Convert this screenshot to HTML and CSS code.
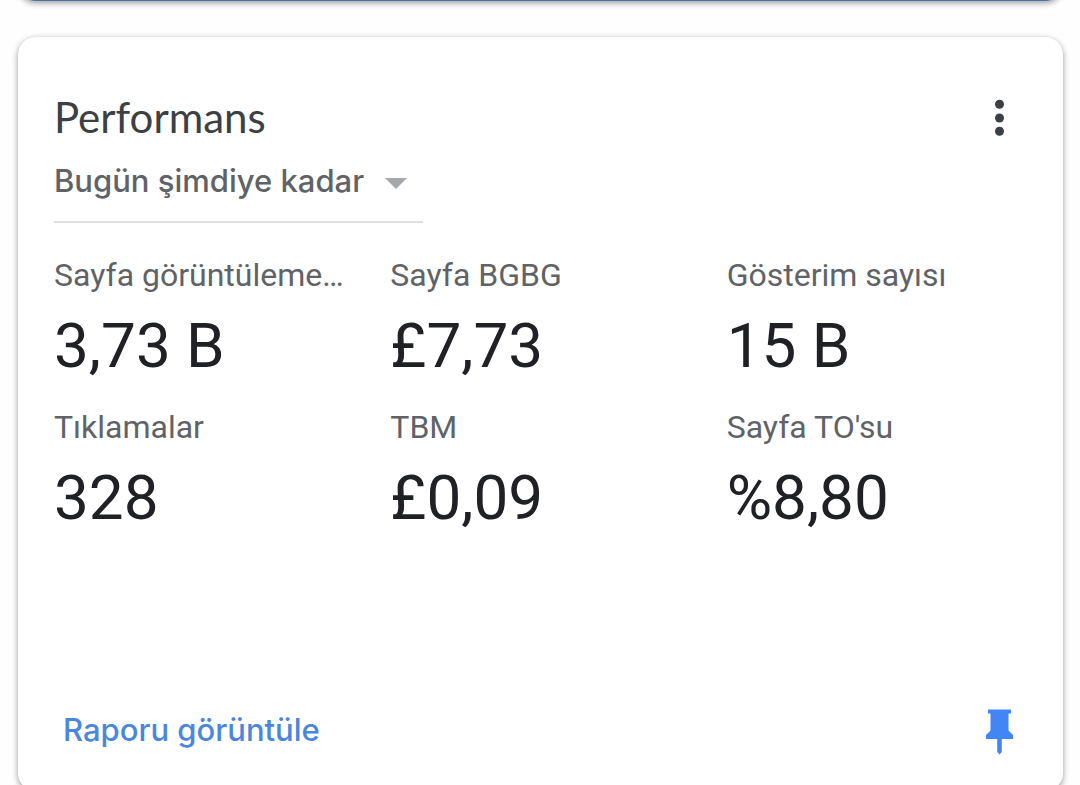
FILE: index.html
```html
<!DOCTYPE html>
<html lang="tr">
<head>
<meta charset="utf-8">
<meta name="viewport" content="width=device-width, initial-scale=1">
<title>Performans</title>
<link rel="stylesheet" href="styles.css">
</head>
<body>
<main class="feed">
  <div class="card card-previous"></div>
  <section class="card card-performance">
    <header class="card-header">
      <h1 class="card-title">Performans</h1>
      <button class="icon-button" type="button" aria-label="Diğer seçenekler">
        <svg width="10" height="38" viewBox="0 0 10 38" fill="currentColor" aria-hidden="true">
          <circle cx="4.500" cy="6.300" r="4.500"/><circle cx="4.500" cy="20" r="4.500"/><circle cx="4.500" cy="33.300" r="4.500"/>
        </svg>
      </button>
    </header>
    <div class="range">
      <select class="range-select" aria-label="Tarih aralığı">
        <option>Bugün şimdiye kadar</option>
      </select>
      <svg class="range-arrow" width="22" height="15" viewBox="0 0 22 15" aria-hidden="true"><path d="M0 4h22L11 15z" fill="currentColor"/></svg>
    </div>
    <dl class="metrics">
      <div class="metric"><dt>Sayfa görüntüleme…</dt><dd>3,73 B</dd></div>
      <div class="metric"><dt>Sayfa BGBG</dt><dd>£7,73</dd></div>
      <div class="metric"><dt>Gösterim sayısı</dt><dd>15 B</dd></div>
      <div class="metric"><dt>Tıklamalar</dt><dd>328</dd></div>
      <div class="metric"><dt>TBM</dt><dd>£0,09</dd></div>
      <div class="metric"><dt>Sayfa TO'su</dt><dd>%8,80</dd></div>
    </dl>
    <footer class="card-footer">
      <a class="report-link" href="#">Raporu görüntüle</a>
      <button class="icon-button icon-button-pin" type="button" aria-label="Sabitlemeyi kaldır">
        <svg width="28" height="46" viewBox="0 0 28 46" fill="currentColor" aria-hidden="true">
          <path d="M2 0.500h23v4h-2.500v17l4.500 4.500v4H15.800v13L13.500 45.500 11.200 43V30H0v-4L4.500 21.500v-17H2z"/>
        </svg>
      </button>
    </footer>
  </section>
</main>
</body>
</html>
```
FILE: styles.css
```css
* { box-sizing: border-box; }

body {
  margin: 0;
  background: #fefefe;
  color: #202124;
  font-family: Lato, sans-serif;
}

.feed {
  display: flex;
  flex-direction: column;
  gap: 36px;
  padding: 0 17px 36px 18px;
  overflow: hidden;
}

.card {
  border-radius: 18px;
  background: #fff;
  box-shadow: 0 2px 6px rgba(0, 0, 0, 0.4);
}

.card-previous {
  height: 40px;
  margin-top: -39px;
  background: #4573ab;
}

.card-performance { padding: 56px 36px; }

.card-performance { padding-bottom: 36px; }

.card-header {
  display: flex;
  align-items: center;
  justify-content: space-between;
}

.card-title {
  margin: 0;
  color: #3c4043;
  font-size: 42px;
  font-weight: 400;
  line-height: 48px;
}

.icon-button {
  display: flex;
  justify-content: center;
  width: 54px;
  padding: 0;
  border: 0;
  background: none;
  color: #3c4043;
}

.icon-button-pin { color: #4285f4; }

.range {
  display: flex;
  align-items: center;
  width: 369px;
  padding-right: 16px;
  border-bottom: 2px solid #e0e0e0;
}

.range-select {
  flex: 1;
  height: 80px;
  padding: 0 0 2px;
  border: 0;
  appearance: none;
  background: none;
  color: #5f6368;
  font: 500 31px Inter, sans-serif;
}

.range-arrow { color: #a5a8ab; pointer-events: none; }

.metrics {
  display: grid;
  grid-template-columns: repeat(3, 1fr);
  column-gap: 36px;
  row-gap: 24px;
  margin: 32px 0 0;
}

.metric dt {
  color: #5f6368;
  font-family: Roboto, sans-serif;
  font-size: 32px;
  line-height: 40px;
  white-space: nowrap;
}

.metric dd {
  margin: 14px 0 0;
  font-family: Roboto, sans-serif;
  font-size: 62px;
  line-height: 74px;
}

.card-footer {
  display: flex;
  align-items: center;
  justify-content: space-between;
  margin-top: 174px;
}

.report-link {
  padding: 0 0 5px 9px;
  color: #4a86dd;
  font-family: Inter, sans-serif;
  font-size: 31px;
  font-weight: 500;
  line-height: 40px;
  text-decoration: none;
}
```
